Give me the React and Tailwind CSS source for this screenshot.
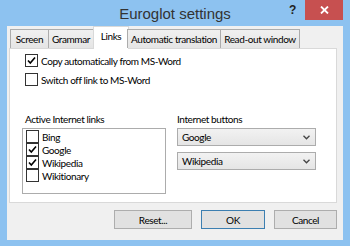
import React from "react";

const Check = () => (
  <svg width="9" height="9" viewBox="0 0 9 9" className="block">
    <path d="M1 4.5 L3.3 7 L8 1.5" fill="none" stroke="#000" strokeWidth="1.6" />
  </svg>
);

const CheckBox = ({ checked }) => (
  <span className="w-[13px] h-[13px] border border-[#333] bg-white flex items-center justify-center shrink-0">
    {checked && <Check />}
  </span>
);

const Chevron = () => (
  <svg width="7" height="5" viewBox="0 0 7 5" className="block">
    <path d="M0.5 0.8 L3.5 3.8 L6.5 0.8" fill="none" stroke="#444" strokeWidth="1.3" />
  </svg>
);

const Combo = ({ value }) => (
  <div className="h-[18px] w-[139px] border border-[#acacac] bg-gradient-to-b from-[#f2f2f2] to-[#e5e5e5] flex items-center justify-between pl-[4px] pr-[5px]">
    <span>{value}</span>
    <Chevron />
  </div>
);

const Button = ({ children, def }) => (
  <div
    className={
      "h-[19px] flex items-center justify-center bg-[#e1e1e1] border " +
      (def ? "border-[#3c7fb1]" : "border-[#adadad]")
    }
  >
    {children}
  </div>
);

const tabs = ["Screen", "Grammar", "Links", "Automatic translation", "Read-out window"];
const tabWidths = ["w-[39px]", "w-[46px]", "w-[36px]", "w-[94px]", "w-[80px]"];

const links = [
  { name: "Bing", on: false },
  { name: "Google", on: true },
  { name: "Wikipedia", on: true },
  { name: "Wikitionary", on: false },
];

export default function App() {
  return (
    <div
      className="w-[350px] h-[246px] bg-[#8dc2f0] flex flex-col text-[10px] tracking-[-0.4px] text-black leading-none whitespace-nowrap"
      style={{ fontFamily: 'Lato, "Liberation Sans", Arial, sans-serif' }}
    >
      <div className="h-[26px] grid grid-cols-[1fr_auto_1fr] items-start">
        <div />
        <div
          className="pt-[6px] text-[15px] tracking-normal text-[#333]"
          style={{ fontFamily: '"Liberation Sans", Arial, sans-serif' }}
        >
          Euroglot settings
        </div>
        <div className="flex justify-end pr-[7px]">
          <span
            className="mt-[4px] mr-[9px] text-[12px] font-bold text-[#222]"
            style={{ fontFamily: '"Liberation Sans", Arial, sans-serif' }}
          >
            ?
          </span>
          <div className="w-[38px] h-[20px] bg-[#c75050] flex items-center justify-center">
            <svg width="9" height="8" viewBox="0 0 9 8">
              <path d="M1 0.5 L8 7.5 M8 0.5 L1 7.5" stroke="#fff" strokeWidth="1.8" />
            </svg>
          </div>
        </div>
      </div>

      <div className="flex-1 mx-[7px] mb-[6px] bg-[#f0f0f0] flex flex-col pl-[2px] pr-[6px]">
        <div className="h-[22px] flex items-end pl-[1px] relative z-10">
          {tabs.map((t, i) =>
            t === "Links" ? (
              <div
                key={t}
                className={
                  tabWidths[i] +
                  " h-[23px] -mb-px bg-white border border-b-0 border-[#d9d9d9] flex items-start justify-center pt-[4px] -mx-[1px]"
                }
              >
                {t}
              </div>
            ) : (
              <div
                key={t}
                className={
                  tabWidths[i] +
                  " h-[19px] bg-gradient-to-b from-[#f0f0f0] to-[#e5e5e5] border border-b-0 border-[#acacac] flex items-center justify-center -ml-px first:ml-0"
                }
              >
                {t}
              </div>
            )
          )}
        </div>

        <div className="h-[155px] bg-white border border-[#d9d9d9] relative pl-[15px] pt-[5px]">
          <div className="flex items-center gap-[3px] h-[13px] mt-[0px]">
            <CheckBox checked />
            <span>Copy automatically from MS-Word</span>
          </div>
          <div className="flex items-center gap-[3px] h-[13px] mt-[6px]">
            <CheckBox />
            <span>Switch off link to MS-Word</span>
          </div>

          <div className="flex mt-[28px] -ml-[3px]">
            <div className="w-[144px]">
              <div className="pl-[3px] h-[10px]">Active Internet links</div>
              <div className="mt-[4px] h-[66px] border border-[#acacac] pl-[3px] pt-[1px]">
                {links.map((l) => (
                  <div key={l.name} className="flex items-center gap-[3px] h-[13px]">
                    <CheckBox checked={l.on} />
                    <span>{l.name}</span>
                  </div>
                ))}
              </div>
            </div>
            <div className="ml-[11px]">
              <div className="h-[10px]">Internet buttons</div>
              <div className="mt-[4px]">
                <Combo value="Google" />
              </div>
              <div className="mt-[6px]">
                <Combo value="Wikipedia" />
              </div>
            </div>
          </div>
        </div>

        <div className="flex justify-end gap-[9px] mt-[7px] pr-0">
          <div className="w-[78px]">
            <Button>Reset...</Button>
          </div>
          <div className="w-[64px]">
            <Button def>OK</Button>
          </div>
          <div className="w-[63px]">
            <Button>Cancel</Button>
          </div>
        </div>
      </div>
    </div>
  );
}
